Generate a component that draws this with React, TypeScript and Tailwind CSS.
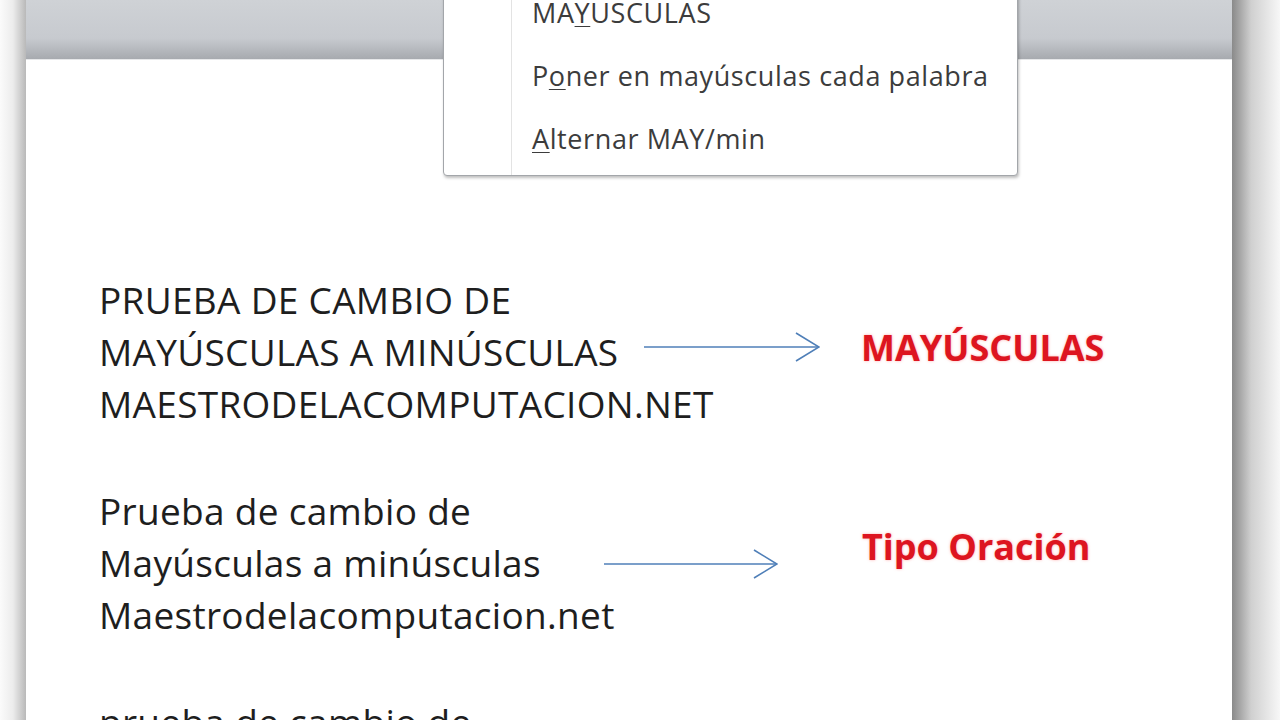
import React from 'react';

const menuItems = [
  { pre: 'MA', key: 'Y', post: 'USCULAS' },
  { pre: 'P', key: 'o', post: 'ner en mayúsculas cada palabra' },
  { pre: '', key: 'A', post: 'lternar MAY/min' },
];

function Arrow({ width }: { width: number }) {
  return (
    <svg width={width} height={32} viewBox={`0 0 ${width} 32`} className="shrink-0">
      <line x1={0} y1={16} x2={width - 1} y2={16} stroke="#4f7fb8" strokeWidth={1.6} />
      <polyline
        points={`${width - 24},2 ${width - 1},16 ${width - 24},30`}
        fill="none"
        stroke="#4f7fb8"
        strokeWidth={1.6}
      />
    </svg>
  );
}

function Group({
  lines,
  arrowGap,
  arrowWidth,
  arrowOffset,
  label,
  labelGap,
  labelOffset,
}: {
  lines: string[];
  arrowGap?: number;
  arrowWidth?: number;
  arrowOffset?: number;
  label?: string;
  labelGap?: number;
  labelOffset?: number;
}) {
  return (
    <div className="flex items-start">
      <div className="w-[505px] shrink-0 text-[37px] leading-[52px] tracking-[0.3px] text-[#1e1e1e] whitespace-nowrap">
        {lines.map((l) => (
          <div key={l}>{l}</div>
        ))}
      </div>
      {label && (
        <div className="flex items-center h-[156px]" style={{ marginLeft: arrowGap }}>
          <div style={{ marginTop: arrowOffset }}>
            <Arrow width={arrowWidth ?? 176} />
          </div>
          <div
            className="text-[36px] leading-[48px] font-bold text-[#dd1520] [text-shadow:0_0_3px_rgba(255,120,120,0.6)]"
            style={{ marginTop: labelOffset, marginLeft: labelGap }}
          >
            {label}
          </div>
        </div>
      )}
    </div>
  );
}

export default function App() {
  return (
    <div className="w-[1280px] h-[720px] overflow-hidden flex bg-white font-['Open_Sans',sans-serif]">
      {/* left shadow */}
      <div className="w-[26px] shrink-0 bg-linear-to-r from-[#fbfbfb] via-[#ececec] to-[#b9b9b9]" />

      {/* page */}
      <div className="relative flex-1 bg-white">
        <div className="h-[60px] bg-linear-to-b from-[#cfd2d6] via-[#c7cacf] via-65% to-[#a7aaaf] border-b border-[#e6e7e9]" />

        {/* dropdown menu */}
        <div className="absolute left-[417px] top-[-16px] w-[575px] h-[192px] bg-white border border-[#a3a6aa] rounded-b-[4px] shadow-[1px_2px_3px_rgba(0,0,0,0.25)] flex">
          <div className="w-[68px] shrink-0 border-r border-[#e3e3e3]" />
          <div className="flex-1 pl-[20px] -mt-[3px]">
            {menuItems.map((it) => (
              <div
                key={it.post}
                className="h-[63px] flex items-center text-[27px] text-[#3c3c3c] tracking-[0.6px] whitespace-nowrap"
              >
                {it.pre}
                <span className="underline underline-offset-[3px] decoration-1">{it.key}</span>
                {it.post}
              </div>
            ))}
          </div>
        </div>

        {/* document body */}
        <div className="pl-[73px] pt-[214px] flex flex-col gap-[55px]">
          <Group
            lines={['PRUEBA DE CAMBIO DE', 'MAYÚSCULAS A MINÚSCULAS', 'MAESTRODELACOMPUTACION.NET']}
            arrowGap={40}
            arrowWidth={176}
            arrowOffset={-10}
            label="MAYÚSCULAS"
            labelGap={41}
            labelOffset={-8}
          />
          <Group
            lines={['Prueba de cambio de', 'Mayúsculas a minúsculas', 'Maestrodelacomputacion.net']}
            arrowGap={0}
            arrowWidth={174}
            arrowOffset={2}
            label="Tipo Oración"
            labelGap={84}
            labelOffset={-32}
          />
          <Group lines={['prueba de cambio de', 'mayúsculas a minúsculas', 'maestrodelacomputacion.net']} />
        </div>
      </div>

      {/* right shadow */}
      <div className="w-[48px] shrink-0 bg-linear-to-r from-[#8a8a8a] via-[#d0d0d0] via-40% to-[#f7f7f7]" />
    </div>
  );
}
